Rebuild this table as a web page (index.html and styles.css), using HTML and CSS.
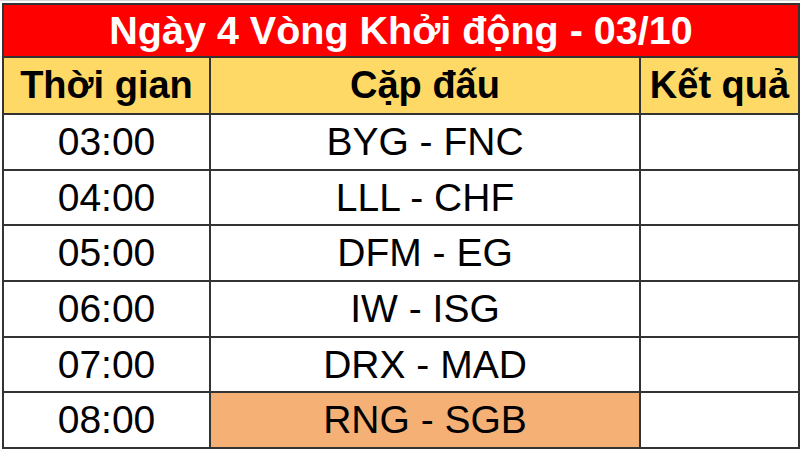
FILE: index.html
```html
<!DOCTYPE html>
<html lang="vi">
<head>
<meta charset="utf-8">
<link rel="stylesheet" href="styles.css">
</head>
<body>
<table class="sheet">
  <colgroup>
    <col class="c-time">
    <col class="c-match">
    <col class="c-result">
  </colgroup>
  <tr class="title-row"><td colspan="3">Ngày 4 Vòng Khởi động - 03/10</td></tr>
  <tr class="head-row"><td>Thời gian</td><td>Cặp đấu</td><td>Kết quả</td></tr>
  <tr class="row"><td>03:00</td><td>BYG - FNC</td><td></td></tr>
  <tr class="row"><td>04:00</td><td>LLL - CHF</td><td></td></tr>
  <tr class="row"><td>05:00</td><td>DFM - EG</td><td></td></tr>
  <tr class="row"><td>06:00</td><td>IW - ISG</td><td></td></tr>
  <tr class="row"><td>07:00</td><td>DRX - MAD</td><td></td></tr>
  <tr class="row"><td>08:00</td><td class="hl">RNG - SGB</td><td></td></tr>
</table>
</body>
</html>
```
FILE: styles.css
```css
html, body {
  margin: 0;
  padding: 0;
  background: #ffffff;
}
body {
  padding: 2px 0 0 2px;
  border-top: 1px solid #d4d4d4;
  font-family: "Liberation Sans", Arial, sans-serif;
}
.sheet {
  border-collapse: collapse;
  width: 796px;
  table-layout: fixed;
}
.c-time { width: 207px; }
.c-match { width: 430px; }
.c-result { width: 159px; }
.sheet td {
  border: 2px solid #333333;
  padding: 0;
  text-align: center;
  vertical-align: middle;
  white-space: nowrap;
  overflow: hidden;
}
.title-row td {
  background: #ff0000;
  color: #ffffff;
  font-weight: bold;
  font-size: 39.5px;
  height: 51px;
}
.head-row td {
  background: #ffd966;
  color: #000000;
  font-weight: bold;
  font-size: 38px;
  height: 55px;
}
.row td {
  font-size: 39px;
  color: #000000;
  height: 53.7px;
}
.row td.hl {
  background: #f4b075;
}
```
